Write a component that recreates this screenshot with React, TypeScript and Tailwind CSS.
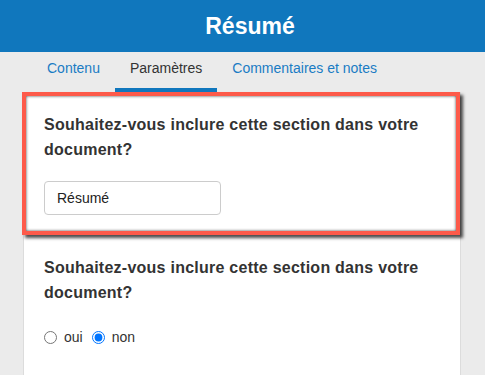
import React from "react";

const tabs = [
  { label: "Contenu", active: false },
  { label: "Paramètres", active: true },
  { label: "Commentaires et notes", active: false },
];

const Question: React.FC = () => (
  <p className="text-[16px] font-bold leading-[25px] tracking-[0.25px] text-[#333]">
    Souhaitez-vous inclure cette section dans votre document?
  </p>
);

export default function App() {
  return (
    <div className="min-h-screen bg-[#ebebeb] font-['Liberation_Sans',Arial,sans-serif]">
      <header className="flex h-[52px] items-center justify-center bg-[#1077bd] pl-[15px]">
        <h1 className="text-[23px] font-bold text-white">Résumé</h1>
      </header>

      <nav className="flex h-[40px] pl-[32px]">
        {tabs.map((t) => (
          <div
            key={t.label}
            className={
              t.active
                ? "h-full border-b-4 border-[#1077bd] px-[15px] pt-[8px] text-[14px] leading-[16px] text-[#333]"
                : "h-full border-b-4 border-transparent px-[15px] pt-[8px] text-[14px] leading-[16px] text-[#1a7cc4]"
            }
          >
            {t.label}
          </div>
        ))}
      </nav>

      <main className="ml-[23px] w-[438px] min-h-[283px] border-x border-[#dcdcdc] bg-white">
        <section className="-ml-[2px] w-[438px] border-4 border-[#fd5a4a] px-[18px] pb-[16px] pt-[16px] shadow-[3px_3px_3px_rgba(0,0,0,0.7),inset_0_0_3px_rgba(0,0,0,0.75)]">
          <Question />
          <div className="mt-[19px] flex h-[34px] w-[177px] items-center rounded-[4px] border border-[#ccc] px-[12px] text-[14px] text-[#222]">
            Résumé
          </div>
        </section>

        <section className="px-[20px] pt-[20px]">
          <Question />
          <div className="mt-[22px] flex items-center text-[14px] text-[#333]">
            <label className="flex items-center">
              <input type="radio" name="inc" className="m-0 h-[13px] w-[13px]" />
              <span className="ml-[7px]">oui</span>
            </label>
            <label className="ml-[9px] flex items-center">
              <input type="radio" name="inc" defaultChecked className="m-0 h-[13px] w-[13px]" />
              <span className="ml-[7px]">non</span>
            </label>
          </div>
        </section>
      </main>
    </div>
  );
}
